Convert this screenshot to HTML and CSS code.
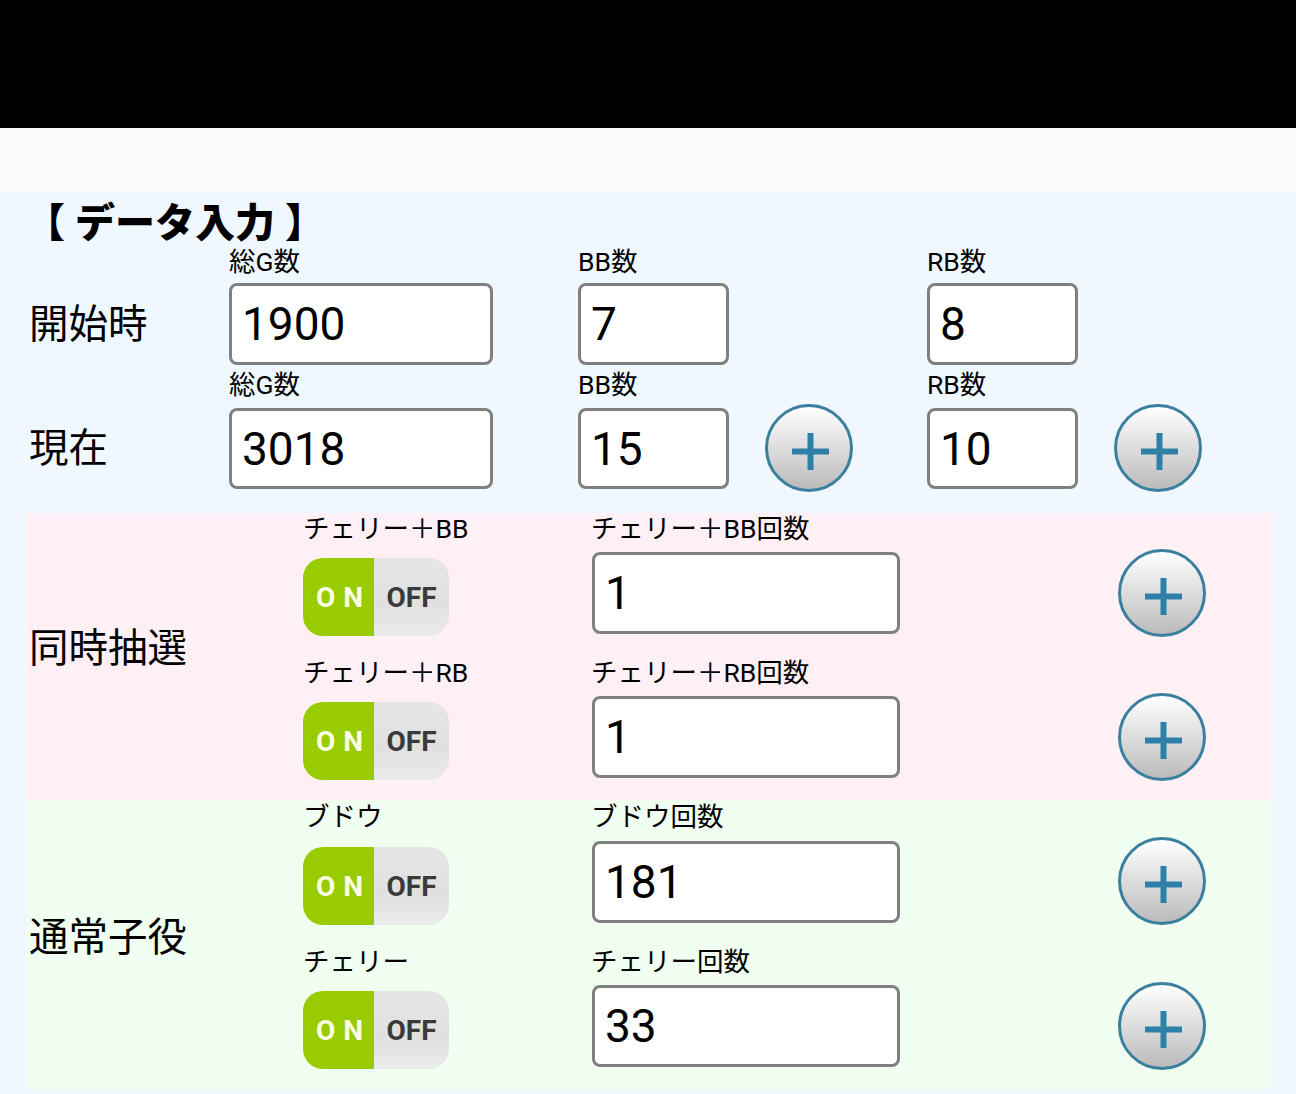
FILE: index.html
```html
<!DOCTYPE html>
<html lang="ja">
<head>
    <meta charset="UTF-8">
    <meta name="viewport" content="width=device-width, initial-scale=1.0">
    <title>データ入力</title>
    <link rel="stylesheet" href="styles.css">
</head>
<body>
    <div class="status-bar"></div>
    <div class="app-bar"></div>

    <main class="content">
        <h1 class="title">【 データ入力 】</h1>

        <div class="data-row">
            <div class="row-name">開始時</div>
            <div class="field">
                <label class="caption">総G数</label>
                <div class="control"><input class="num num-total" type="text" value="1900"></div>
            </div>
            <div class="field">
                <label class="caption">BB数</label>
                <div class="control"><input class="num num-small" type="text" value="7"></div>
            </div>
            <div class="field">
                <label class="caption">RB数</label>
                <div class="control"><input class="num num-small" type="text" value="8"></div>
            </div>
        </div>

        <div class="data-row data-row-current">
            <div class="row-name">現在</div>
            <div class="field">
                <label class="caption">総G数</label>
                <div class="control"><input class="num num-total" type="text" value="3018"></div>
            </div>
            <div class="field">
                <label class="caption">BB数</label>
                <div class="control">
                    <input class="num num-small" type="text" value="15">
                    <button class="plus" type="button"><svg viewBox="0 0 37 37"><path d="M15.5 0h6v15.500H37v6H21.500V37h-6V21.500H0v-6h15.500z"/></svg></button>
                </div>
            </div>
            <div class="field">
                <label class="caption">RB数</label>
                <div class="control">
                    <input class="num num-small" type="text" value="10">
                    <button class="plus" type="button"><svg viewBox="0 0 37 37"><path d="M15.5 0h6v15.500H37v6H21.500V37h-6V21.500H0v-6h15.500z"/></svg></button>
                </div>
            </div>
        </div>

        <section class="group group-pink">
            <div class="group-name">同時抽選</div>
            <div class="group-rows">
                <div class="count-row">
                    <div class="switch-col">
                        <label class="count-caption">チェリー＋BB</label>
                        <div class="switch"><span class="switch-on">ON</span><span class="switch-off">OFF</span></div>
                    </div>
                    <div class="count-col">
                        <label class="count-caption">チェリー＋BB回数</label>
                        <input class="num num-count" type="text" value="1">
                    </div>
                    <button class="plus plus-row" type="button"><svg viewBox="0 0 37 37"><path d="M15.5 0h6v15.500H37v6H21.500V37h-6V21.500H0v-6h15.500z"/></svg></button>
                </div>
                <div class="count-row">
                    <div class="switch-col">
                        <label class="count-caption">チェリー＋RB</label>
                        <div class="switch"><span class="switch-on">ON</span><span class="switch-off">OFF</span></div>
                    </div>
                    <div class="count-col">
                        <label class="count-caption">チェリー＋RB回数</label>
                        <input class="num num-count" type="text" value="1">
                    </div>
                    <button class="plus plus-row" type="button"><svg viewBox="0 0 37 37"><path d="M15.5 0h6v15.500H37v6H21.500V37h-6V21.500H0v-6h15.500z"/></svg></button>
                </div>
            </div>
        </section>

        <section class="group group-green">
            <div class="group-name">通常子役</div>
            <div class="group-rows">
                <div class="count-row">
                    <div class="switch-col">
                        <label class="count-caption">ブドウ</label>
                        <div class="switch"><span class="switch-on">ON</span><span class="switch-off">OFF</span></div>
                    </div>
                    <div class="count-col">
                        <label class="count-caption">ブドウ回数</label>
                        <input class="num num-count" type="text" value="181">
                    </div>
                    <button class="plus plus-row" type="button"><svg viewBox="0 0 37 37"><path d="M15.5 0h6v15.500H37v6H21.500V37h-6V21.500H0v-6h15.500z"/></svg></button>
                </div>
                <div class="count-row">
                    <div class="switch-col">
                        <label class="count-caption">チェリー</label>
                        <div class="switch"><span class="switch-on">ON</span><span class="switch-off">OFF</span></div>
                    </div>
                    <div class="count-col">
                        <label class="count-caption">チェリー回数</label>
                        <input class="num num-count" type="text" value="33">
                    </div>
                    <button class="plus plus-row" type="button"><svg viewBox="0 0 37 37"><path d="M15.5 0h6v15.500H37v6H21.500V37h-6V21.500H0v-6h15.500z"/></svg></button>
                </div>
            </div>
        </section>
    </main>
</body>
</html>
```

FILE: styles.css
```css
* {
    box-sizing: border-box;
}
body {
    margin: 0;
    height: 1094px;
    overflow: hidden;
    background-color: aliceblue;
    color: #000;
    font-family: Roboto, "Noto Sans CJK JP", sans-serif;
}
.status-bar {
    height: 128px;
    background-color: #000;
}
.app-bar {
    height: 63px;
    background-color: #fafafa;
}
.title {
    margin: 0;
    height: 53px;
    padding-left: 25px;
    font-size: 40px;
    line-height: 65px;
    font-weight: 900;
    white-space: nowrap;
}
.data-row {
    display: flex;
    padding-left: 29px;
}
.data-row-current {
    margin-top: 2px;
}
.row-name {
    width: 200px;
    padding-top: 40px;
    font-size: 39.5px;
    line-height: 81px;
}
.data-row-current .row-name {
    padding-top: 41px;
}
.field {
    width: 349px;
}
.caption {
    display: block;
    height: 39px;
    font-size: 26.5px;
    line-height: 36px;
}
.data-row-current .caption {
    height: 37px;
}
.control {
    display: flex;
    align-items: center;
    gap: 36px;
}
.data-row-current .control {
    height: 88px;
}
.num {
    display: block;
    height: 82px;
    padding: 0 0 0 10px;
    background-color: #fff;
    border: 3px solid #808080;
    border-radius: 8px;
    color: #000;
    font-family: Roboto, sans-serif;
    font-size: 46px;
}
.data-row-current .num {
    height: 81px;
    margin-top: 1px;
}
.num-total {
    width: 264px;
}
.num-small {
    width: 151px;
}
.num-count {
    width: 308px;
}
.plus {
    display: flex;
    flex: none;
    align-items: center;
    justify-content: center;
    width: 88px;
    height: 88px;
    padding: 6px 0 0 2px;
    background: linear-gradient(#fff, #bbb);
    border: 3px solid #3b7f9f;
    border-radius: 50%;
}
.plus svg {
    width: 37px;
    height: 37px;
    fill: #2f80a6;
}
.group {
    display: flex;
    align-items: center;
    width: 1247px;
    margin-left: 26px;
}
.group-pink {
    height: 287px;
    margin-top: 21px;
    background-color: #fff0f5;
}
.group-green {
    height: 289px;
    padding-top: 1px;
    background-color: #f0fff0;
}
.group-name {
    width: 277px;
    padding: 0 0 24px 3px;
    font-size: 39.5px;
    white-space: nowrap;
}
.group-rows {
    display: flex;
    flex-direction: column;
    align-self: flex-start;
}
.count-row {
    display: flex;
    height: 144px;
}
.switch-col {
    width: 289px;
}
.count-col {
    width: 526px;
}
.count-caption {
    display: block;
    height: 30px;
    font-size: 26.5px;
    line-height: 32px;
    white-space: nowrap;
}
.count-col .count-caption {
    margin-left: -1px;
    margin-bottom: 9px;
}
.switch-col .count-caption {
    margin-bottom: 15px;
}
.group-green .count-row:first-child .count-col .count-caption {
    margin-bottom: 10px;
}
.group-green .count-row:first-child .switch-col .count-caption {
    margin-bottom: 16px;
}
.switch {
    display: flex;
    width: 146px;
    height: 78px;
    overflow: hidden;
    border-radius: 20px;
    font-size: 28px;
    font-weight: 700;
    line-height: 80px;
    text-align: center;
}
.switch-on {
    width: 71px;
    padding-left: 10px;
    background-color: #9c0;
    color: #fbffe6;
    letter-spacing: 8px;
    white-space: nowrap;
}
.switch-off {
    width: 75px;
    background: linear-gradient(#e6e6e6, #e0e0e0 60%, #ebebeb);
    color: #3a3a3a;
}
.plus-row {
    margin-top: 36px;
}
.group-green .count-row + .count-row {
    margin-top: 1px;
}
```
